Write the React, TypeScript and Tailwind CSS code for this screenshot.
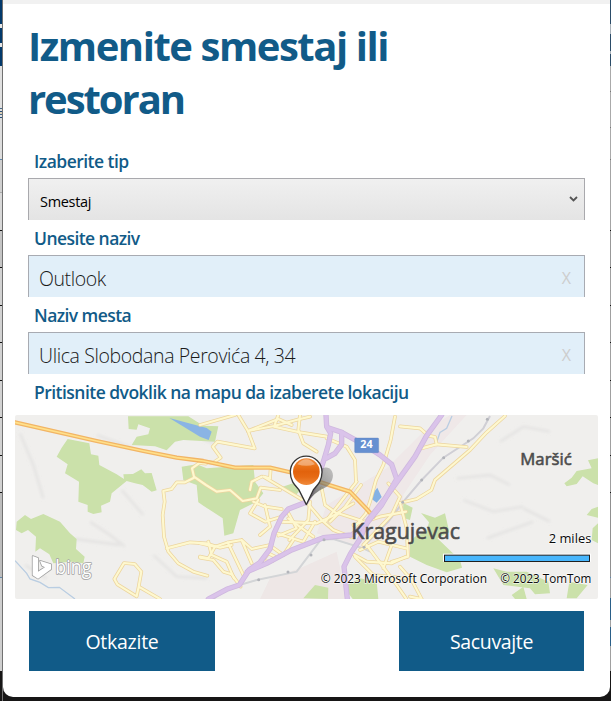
import React from "react";

type Segment = [height: number, color: string];

const leftEdge: Segment[] = [
  [24, "#03396b"], [4, "#e6e6e6"], [15, "#03396b"], [4, "#e6e6e6"], [19, "#03396b"],
  [42, "#e0e0e0"], [1, "#48698a"], [2, "#e0e0e0"], [1, "#254e79"], [2, "#dccfb8"], [1, "#48698a"], [2, "#e0e0e0"], [1, "#254e79"],
  [41, "#dddddd"], [1, "#5f86ab"], [32, "#cfcfcf"], [1, "#aaaaaa"], [37, "#d8d8d8"],
  [1, "#111111"], [36, "#c4c4c4"], [1, "#111111"], [37, "#d2d2d2"], [1, "#111111"], [36, "#d2d2d2"],
  [1, "#111111"], [37, "#d2d2d2"], [1, "#111111"], [36, "#d2d2d2"], [1, "#111111"], [37, "#d2d2d2"],
  [1, "#111111"], [36, "#d2d2d2"], [1, "#111111"], [84, "#bdbdbd"], [1, "#5f86ab"], [93, "#cecece"],
];

const rightEdge: Segment[] = [
  [24, "#2b4c68"], [10, "#a9b1b8"], [17, "#2b4c68"], [3, "#a9b1b8"], [12, "#2b4c68"],
  [25, "#aaaaaa"], [1, "#777777"], [35, "#aaaaaa"], [1, "#777777"], [31, "#aaaaaa"], [1, "#777777"],
  [70, "#a4a4a4"], [1, "#111111"], [36, "#989898"], [1, "#111111"], [37, "#a0a0a0"], [1, "#111111"],
  [36, "#a0a0a0"], [1, "#111111"], [37, "#a0a0a0"], [1, "#111111"], [36, "#a0a0a0"], [1, "#111111"],
  [37, "#a0a0a0"], [1, "#111111"], [36, "#a0a0a0"], [1, "#111111"], [84, "#909090"], [1, "#5f86ab"],
  [20, "#a0a0a0"], [22, "#2a5f88"], [7, "#a0a0a0"], [19, "#2a5f88"], [25, "#a0a0a0"],
];

function Edge({ segments, className }: { segments: Segment[]; className: string }) {
  return (
    <div className={"flex shrink-0 flex-col " + className}>
      {segments.map(([height, color], i) => (
        <div key={i} className="shrink-0" style={{ height, backgroundColor: color }} />
      ))}
    </div>
  );
}

function Label({ children, className }: { children: React.ReactNode; className: string }) {
  return (
    <div className={"flex items-center whitespace-nowrap pl-[6px] text-[17.5px] font-semibold leading-6 text-[#115b88] " + className}>
      {children}
    </div>
  );
}

function Field({ value, className }: { value: string; className: string }) {
  return (
    <div className="flex h-[42px] items-center justify-between border border-b-0 border-[#a8abb2] bg-[#e1eff9] pl-[10px] pr-[13px] pt-[4px]">
      <span className={"whitespace-nowrap text-[19.5px] font-light leading-6 text-[#1a1a1a] " + className}>{value}</span>
      <span className="pb-px text-[16px] leading-5 text-[#cdcdcd]">X</span>
    </div>
  );
}

// Map geometry is kept in three tiles, each with its own horizontal origin.
type Line = [tile: number, d: string];

const majorRoads: Line[] = [
  [600, "M378 30 L380 65 L392 85 L385 120 L370 170 L350 230 L318 292 L265 312 L245 335 L222 385 L210 432 L180 472 L147 495 L118 540 L80 553 L25 582"],
  [600, "M384 68 L425 82 L490 118 L540 150 L575 178 L590 222 L545 300 L500 355 L455 390 L370 398 L275 435 L200 475 L142 500"],
  [600, "M425 82 L425 118 L405 145 L378 160"],
  [1200, "M125 30 L80 92 L45 155 L0 218 L-48 285 L-95 345 L-122 405 L-148 445 L-168 485 L-158 582"],
];

const minorRoads: Line[] = [
  [0, "M618 176 L598 174 L576 190 L582 215 L618 240 L650 260 L690 255 L728 288 L770 280 L782 248 L840 255"],
  [0, "M582 218 L555 232 L530 232 L515 252 L490 258 L494 290 L488 330 L492 395 L505 440 L535 475 L580 500 L622 512"],
  [0, "M500 430 L570 412 L618 415 L660 428 L695 420"],
  [0, "M480 582 L416 545 L424 500 L404 477 L372 474 L343 522 L352 538 L410 574 L416 545"],
  [0, "M600 458 L640 465 L670 500 L695 508 L722 545"],
  [600, "M115 30 L144 78 L164 130 L52 110 L38 125 L62 158 L40 173 L0 170"],
  [600, "M0 60 L105 30 M144 78 L222 63 L300 42 L330 35 M235 30 L222 65 L300 82 L380 95"],
  [600, "M144 78 L235 42 L275 60 M300 30 L295 75 L310 115 L350 140"],
  [600, "M380 100 L440 125 L465 165 L468 230"],
  [600, "M585 35 L572 105 L550 180 L528 225 L510 290 L498 325 L465 365"],
  [600, "M470 230 L442 265 L415 300 L376 350 M483 240 L435 306 L390 350"],
  [600, "M212 190 L210 220 L190 215 L320 292 L365 345 L400 375 L455 397"],
  [600, "M185 215 L155 230 L150 255 M160 290 L195 305 L245 312 M175 285 L150 325 L195 350 L240 337 M195 300 L210 365 L180 390"],
  [600, "M240 350 L350 355 L415 325 L485 347 M230 385 L310 410 L345 350 M260 315 L290 370 L235 392"],
  [600, "M330 290 L325 345 L268 405 M265 340 L340 395 M365 250 L375 300 L410 325 L460 295"],
  [600, "M25 410 L35 450 L80 470 L102 520 M45 425 L85 412 L125 405 L155 432 L210 420 M83 412 L130 510 M125 405 L155 475"],
  [600, "M0 415 L45 425 L25 460 L0 455 M215 425 L250 450 L280 405"],
  [600, "M190 465 L205 445 L225 455 L218 468 L195 470"],
  [600, "M455 445 L500 470 L575 475 L618 455 M480 435 L535 410 L618 430 M460 360 L540 335 L618 320"],
  [600, "M500 420 L590 540 L618 580 M465 455 L520 510 L618 520 M575 420 L550 490"],
  [600, "M565 235 L600 275 L575 330 L490 420"],
  [1200, "M0 64 L60 70 L85 92 L105 96 L110 118 L65 130"],
  [1200, "M110 118 L200 126 M315 33 L260 82 L210 135 L105 225 L94 255 L50 282 L0 294"],
  [1200, "M0 294 L20 370 L24 455 L-25 470 M0 485 L35 525 L65 582 M30 575 L65 582"],
];

function RoadMap() {
  return (
    <svg viewBox="45 30 1749 552" className="block h-[184px] w-[583px] rounded-[2px]" preserveAspectRatio="none">
      <defs>
        <linearGradient id="pin" x1="0" y1="0" x2="0" y2="1">
          <stop offset="0" stopColor="#ee8a3c" />
          <stop offset=".3" stopColor="#e9731a" />
          <stop offset=".5" stopColor="#e2620c" />
          <stop offset=".7" stopColor="#e66a14" />
          <stop offset="1" stopColor="#f08a3a" />
        </linearGradient>
        <linearGradient id="shade" x1="0" y1="1" x2="1" y2="0">
          <stop offset="0" stopColor="#333" stopOpacity=".8" />
          <stop offset="1" stopColor="#888" stopOpacity=".45" />
        </linearGradient>
        <filter id="soft"><feGaussianBlur stdDeviation="1.6" /></filter>
        <filter id="terrain"><feGaussianBlur stdDeviation="5" /></filter>
      </defs>
      <rect x="45" y="30" width="1749" height="552" fill="#f0efed" />
      <g filter="url(#soft)">
        <path d="M980 300 L1160 190 L1270 80 L1350 30 L1400 30 L1290 150 L1210 270 L1200 370 L1080 430 L950 385Z" fill="#efe8e8" />
        <path d="M810 520 L900 490 L1010 440 L1040 582 L780 582Z" fill="#eee7e6" />
        <g fill="none" stroke="#e3e2e1" strokeWidth="7" filter="url(#terrain)">
          <path d="M60 85 L100 180 L130 280 M270 350 L330 390 L375 425 M225 402 L360 420 M365 255 L430 330 M460 450 L530 515 L620 520 M75 480 L140 520 M290 90 L400 130 M540 70 L650 120 M1370 220 L1470 210 L1530 240 M1390 285 L1480 320 L1570 305 M1570 310 L1650 350 M1460 400 L1600 350 M1500 110 L1570 65 L1650 80" />
        </g>
        <g fill="#cbe1aa">
          <path d="M203 102 L268 115 L273 148 L295 152 L298 180 L350 208 L372 222 L370 208 L399 207 L424 193 L435 205 L455 204 L470 256 L455 260 L428 240 L405 235 L380 228 L335 265 L330 290 L303 302 L305 322 L280 327 L263 320 L263 300 L235 290 L237 230 L195 205 L203 178 L170 155 L185 128Z" />
          <path d="M75 330 L93 342 L130 327 L180 350 L210 385 L230 402 L228 432 L254 455 L250 475 L215 470 L160 475 L148 448 L120 430 L106 440 L108 395 L84 375 L65 385 L48 375 L50 350Z" />
          <path d="M384 34 L565 34 L610 62 L655 64 L645 110 L550 105 L525 110 L500 136 L465 124 L395 120 L410 95 L445 88 L450 70 L415 58 L410 74 L386 72Z" />
          <path d="M545 185 L590 178 L620 190 L760 180 L765 230 L790 265 L770 290 L720 315 L700 385 L673 392 L668 340 L610 302 L595 292 L590 240 L550 225Z" />
          <path d="M848 245 L888 232 L905 250 L890 268 L850 255Z M910 580 L945 540 L985 548 L984 582Z M1030 545 L1080 520 L1130 530 L1135 582 L1058 582Z" />
          <path d="M1210 294 L1238 308 L1230 345 L1208 338Z M1263 324 L1305 338 L1335 325 L1348 382 L1312 400 L1380 465 L1386 488 L1340 502 L1280 480 L1230 455 L1230 410 L1245 395 L1280 378 L1287 352Z" />
          <path d="M1794 160 L1764 166 L1775 190 L1730 198 L1715 218 L1693 235 L1700 244 L1730 237 L1748 214 L1780 235 L1794 240Z M1794 305 L1775 312 L1760 330 L1794 338Z M1794 355 L1778 370 L1775 405 L1794 415Z M1480 490 L1520 500 L1580 500 L1645 530 L1650 565 L1605 568 L1590 550 L1510 540Z M1535 570 L1570 545 L1580 582 L1545 582Z M1708 530 L1763 540 L1730 580 L1700 580Z" />
        </g>
        <path d="M508 39 L620 69 L635 80 L626 105 L600 95Z" fill="#8ab4e4" />
        <path d="M1119 265 L1132 248 L1145 276 L1130 293 L1115 282Z" fill="#84b2e4" />
        <path d="M45 467 L80 505 L90 522 L120 532 L145 548 L178 547 L225 582 M1356 33 L1340 70 L1320 82 L1310 112" fill="none" stroke="#b9cde2" strokeWidth="4" />
        <path d="M640 582 L685 550 L770 525 L890 500 L920 460 L962 405 L1000 402 L1090 430 L1110 440" fill="none" stroke="#d3d5d7" strokeWidth="6" />
        <path d="M1090 425 L1165 350 L1210 290 L1265 225 L1330 158 L1420 100 L1450 70 L1470 33" fill="none" stroke="#d0cfd5" strokeWidth="6" />
        <g fill="none" strokeLinejoin="round" strokeLinecap="round">
          {minorRoads.map(([x, d], i) => <path key={i} d={d} transform={`translate(${x} 0)`} stroke="#ecd59f" strokeWidth="11" />)}
          {minorRoads.map(([x, d], i) => <path key={i} d={d} transform={`translate(${x} 0)`} stroke="#fef8cf" strokeWidth="6.5" />)}
          <path d="M45 52 L290 108 L430 138 L530 158 L610 168 L705 188 L810 188 L880 204 L990 241 L1050 260 L1100 312 L1120 335" stroke="#f2b565" strokeWidth="13" />
          <path d="M45 52 L290 108 L430 138 L530 158 L610 168 L705 188 L810 188 L880 204 L990 241 L1050 260 L1100 312 L1120 335" stroke="#ffe08a" strokeWidth="5" />
          {majorRoads.map(([x, d], i) => <path key={i} d={d} transform={`translate(${x} 0)`} stroke="#cfb8df" strokeWidth="16" />)}
          {majorRoads.map(([x, d], i) => <path key={i} d={d} transform={`translate(${x} 0)`} stroke="#dac3ea" strokeWidth="11" />)}
        </g>
        <g fill="#b2b4ba">
          {[[776, 524], [864, 501], [933, 450], [972, 404], [1092, 427], [1208, 292], [1265, 225], [1331, 158], [1405, 108], [1462, 43]].map(([x, y]) => (
            <circle key={x} cx={x} cy={y} r="4.5" />
          ))}
        </g>
      </g>
      <rect x="1064" y="99" width="72" height="44" rx="3" fill="#6690d1" stroke="#557dba" strokeWidth="1" />
      <text x="1081" y="130" textLength="37" lengthAdjust="spacingAndGlyphs" fill="#fff" fontSize="31" fontWeight="700">24</text>
      <g fill="#4c4c4c" stroke="#4c4c4c" strokeWidth="1.8" strokeLinejoin="round" fontWeight="500">
        <text x="1054" y="401" textLength="326" lengthAdjust="spacingAndGlyphs" fontSize="67">Kragujevac</text>
        <text x="1561" y="179" textLength="154" lengthAdjust="spacingAndGlyphs" fontSize="51">Maršić</text>
      </g>
      <path d="M919 298 L948 223 C944 196 972 181 988 190 C1009 205 997 239 973 249 Q943 260 919 298Z" fill="url(#shade)" filter="url(#soft)" />
      <path d="M919 299 L896 253 C885 241 871 229 871 201 A47 47 0 0 1 966 201 C966 229 952 241 941 253Z" fill="#fff" stroke="#363636" strokeWidth="4" strokeLinejoin="round" />
      <circle cx="919" cy="200" r="40" fill="url(#pin)" />
      <path d="M892 178 Q919 148 945 178 Q919 187 892 178Z" fill="#fff" opacity=".35" />
      <g fill="#fff" stroke="#a2a2a2" strokeWidth="5" strokeLinejoin="round" paintOrder="stroke">
        <path d="M98 453 L114 459 V500 L135 487 L126 482 L120 467 L153 478 V493 L114 521 L98 511Z" />
        <text x="166" y="507" textLength="108" lengthAdjust="spacingAndGlyphs" fontSize="58" fontWeight="500">bing</text>
      </g>
      <rect x="1329" y="446" width="444" height="24" fill="#fff" />
      <rect x="1333.5" y="450.5" width="435" height="19" fill="#48b6fc" stroke="#202020" strokeWidth="3" />
      <g fill="#080808" stroke="#fff" strokeWidth="4" strokeOpacity=".75" paintOrder="stroke" strokeLinejoin="round">
        <text x="1646" y="415" textLength="128" lengthAdjust="spacingAndGlyphs" fontSize="39">2 miles</text>
        <text x="962" y="535" textLength="499" lengthAdjust="spacingAndGlyphs" fontSize="38">© 2023 Microsoft Corporation</text>
        <text x="1501" y="535" textLength="273" lengthAdjust="spacingAndGlyphs" fontSize="38">© 2023 TomTom</text>
      </g>
    </svg>
  );
}

export default function App() {
  return (
    <div className="flex h-[701px] w-[611px] overflow-hidden bg-[#171616] font-['Open_Sans','Noto_Sans',sans-serif]">
      <Edge segments={leftEdge} className="w-[3px] border-r border-[#999999]/70" />
      <main className="h-[697px] w-[607px] shrink-0 overflow-hidden rounded-b-[10px] bg-white">
        <div className="h-1 bg-[#f1f1f1]" />
        <div className="px-[25px]">
          <h1 className="h-[140px] pt-[15px] text-[40px] font-bold leading-[53px] tracking-[-1.45px] text-[#115b88]">
            Izmenite smestaj ili
            <br />
            <span className="tracking-[-2.05px]">restoran</span>
          </h1>
          <Label className="h-[34px] pb-px tracking-[-0.53px]">Izaberite tip</Label>
          <div className="flex h-[42px] items-center justify-between border border-b-0 border-[#a9a9ad] bg-linear-to-b from-[#f0f0f0] to-[#e4e4e4] pl-[11px] pr-[6px]">
            <span className="pt-[4px] text-[14.5px] leading-5 tracking-[-0.3px] text-black">Smestaj</span>
            <svg viewBox="0 0 9 7" className="h-[7px] w-[9px]">
              <path d="M1 1 L4.5 4.5 L8 1" fill="none" stroke="#555" strokeWidth="1.8" />
            </svg>
          </div>
          <Label className="h-[35px] tracking-[-0.57px]">Unesite naziv</Label>
          <Field value="Outlook" className="tracking-[-0.4px]" />
          <Label className="h-[35px] tracking-[-0.57px]">Naziv mesta</Label>
          <Field value="Ulica Slobodana Perovića 4, 34" className="tracking-[-0.38px]" />
          <Label className="h-[41px] pb-[5px] tracking-[-0.53px]">Pritisnite dvoklik na mapu da izaberete lokaciju</Label>
        </div>
        <div className="pl-3">
          <RoadMap />
        </div>
        <div className="flex justify-between px-[26px] pt-3">
          <button className="h-[60px] w-[186px] bg-[#115b88] pt-[2px] text-[19.5px] tracking-[-0.25px] text-white">Otkazite</button>
          <button className="h-[60px] w-[185px] bg-[#115b88] pt-[2px] text-[19.5px] tracking-[-0.35px] text-white">Sacuvajte</button>
        </div>
      </main>
      <Edge segments={rightEdge} className="w-px" />
    </div>
  );
}
